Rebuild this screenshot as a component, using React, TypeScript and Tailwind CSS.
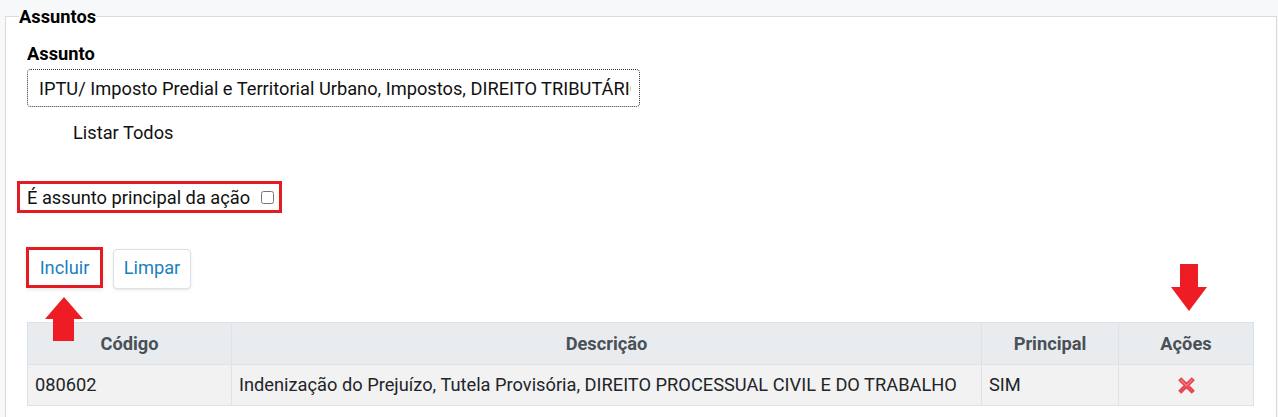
import React from "react";

function UpArrow() {
  return (
    <svg width="38" height="44" viewBox="0 0 38 44" className="absolute left-[45px] top-[297px]">
      <path d="M19 0 L38 22 L29 22 L29 44 L8 44 L8 22 L0 22 Z" fill="#ee1c25" />
    </svg>
  );
}

function DownArrow() {
  return (
    <svg width="36" height="47" viewBox="0 0 36 47" className="absolute left-[1171px] top-[264px]">
      <path d="M9 0 L27 0 L27 23 L36 23 L18 47 L0 23 L9 23 Z" fill="#ee1c25" />
    </svg>
  );
}

function DeleteIcon() {
  return (
    <svg width="21" height="21" viewBox="0 0 20 20">
      <path d="M3 5 L5 3 L10 8 L15 3 L17 5 L12 10 L17 15 L15 17 L10 12 L5 17 L3 15 L8 10 Z" fill="#f0505a" stroke="#e2434d" strokeWidth="1.4" strokeLinejoin="round" />
      <path d="M4.5 4.5 L10 10 L15.5 4.5" fill="none" stroke="#f7868c" strokeWidth="1" />
    </svg>
  );
}

export default function App() {
  return (
    <div
      className="relative min-h-[417px] w-[1278px] overflow-hidden bg-[#f7f8fa] pt-[6px] text-[18.25px] text-[#212529]"
      style={{ fontFamily: "Roboto, 'Liberation Sans', sans-serif" }}
    >
      <fieldset className="ml-[5px] mr-[1px] min-h-[420px] border border-[#dadada] bg-white p-0">
        <legend className="ml-[13px] px-0 text-[18.25px] font-bold leading-[21px] text-black">Assuntos</legend>
        <div className="pl-[21px] pt-[16px]">
          <div className="text-[18.25px] font-bold leading-[21px] text-black">Assunto</div>
          <input
            readOnly
            value="IPTU/ Imposto Predial e Territorial Urbano, Impostos, DIREITO TRIBUTÁRIO"
            className="mt-[5px] block h-[38px] w-[613px] rounded-[4px] border border-dotted border-[#333] bg-white pl-[11px] pr-[8px] text-[18.25px] text-[#111] outline-none"
          />
          <div className="mt-[15px] pl-[46px] leading-[21px] text-[#111]">Listar Todos</div>
          <div className="-ml-[10px] mt-[38px] flex h-[32px] w-[265px] items-center border-[3px] border-[#e31b23] pl-[7px]">
            <span className="leading-[21px] text-[#111]">É assunto principal da ação</span>
            <input type="checkbox" className="ml-[11px] h-[13px] w-[13px]" />
          </div>
          <div className="-ml-[1px] mt-[34px] flex items-start gap-[10px]">
            <button className="h-[41px] w-[77px] border-[3px] border-[#e31b23] bg-white text-[18.25px] text-[#1a7fc1] shadow-[0_2px_4px_rgba(0,0,0,0.08)]">
              Incluir
            </button>
            <button className="mt-[2px] h-[40px] w-[78px] rounded-[4px] border border-[#dee2e6] bg-white pb-[2px] text-[18.25px] text-[#1a7fc1] shadow-[0_1px_3px_rgba(0,0,0,0.1)]">
              Limpar
            </button>
          </div>
          <table className="mt-[33px] w-[1227px] border-collapse text-[18.25px]">
            <thead>
              <tr className="h-[42px] bg-[#e9ecef]">
                <th className="w-[204px] border border-[#dee2e6] font-bold text-[#495057]">Código</th>
                <th className="w-[750px] border border-[#dee2e6] font-bold text-[#495057]">Descrição</th>
                <th className="w-[137px] border border-[#dee2e6] font-bold text-[#495057]">Principal</th>
                <th className="border border-[#dee2e6] font-bold text-[#495057]">Ações</th>
              </tr>
            </thead>
            <tbody>
              <tr className="h-[41px] bg-[#f2f2f2]">
                <td className="border border-[#dee2e6] pl-[7px] text-[#212529]">080602</td>
                <td className="whitespace-nowrap border border-[#dee2e6] pl-[7px] text-[#212529]">
                  Indenização do Prejuízo, Tutela Provisória, DIREITO PROCESSUAL CIVIL E DO TRABALHO
                </td>
                <td className="border border-[#dee2e6] pl-[7px] text-[#212529]">SIM</td>
                <td className="border border-[#dee2e6]">
                  <div className="flex items-center justify-center pl-[1px] pt-[1px]">
                    <DeleteIcon />
                  </div>
                </td>
              </tr>
            </tbody>
          </table>
        </div>
      </fieldset>
      <UpArrow />
      <DownArrow />
    </div>
  );
}
